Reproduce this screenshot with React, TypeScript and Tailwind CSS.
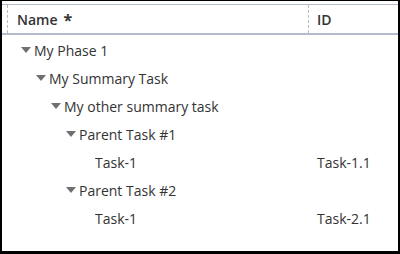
import React from "react";

type Row = { name: string; level: number; id?: string; parent?: boolean };

const rows: Row[] = [
  { name: "My Phase 1", level: 0, parent: true },
  { name: "My Summary Task", level: 1, parent: true },
  { name: "My other summary task", level: 2, parent: true },
  { name: "Parent Task #1", level: 3, parent: true },
  { name: "Task-1", level: 4, id: "Task-1.1" },
  { name: "Parent Task #2", level: 3, parent: true },
  { name: "Task-1", level: 4, id: "Task-2.1" },
];

const pads = ["pl-[19px]", "pl-[34px]", "pl-[49px]", "pl-[64px]", "pl-[93px]"];

export default function App() {
  return (
    <div
      className="w-[400px] h-[254px] bg-white border-black border-t border-l-2 border-r-2 border-b-[3px] overflow-hidden text-[#333]"
      style={{ fontFamily: '"Open Sans", sans-serif' }}
    >
      <div className="mt-[3px] h-[31px] flex border-t border-b-2 border-[#b4bccb] text-[14px]">
        <div className="ml-[5px] w-[302px] border-l border-r border-dashed border-[#b4bccb] flex items-center pl-[9px] pt-[1px] font-semibold">
          Name<span className="ml-[6px] text-[16px] font-bold">*</span>
        </div>
        <div className="flex-1 flex items-center pl-[8px] pt-[1px] font-semibold">ID</div>
      </div>
      <div className="text-[14px] pt-[1px]">
        {rows.map((r, i) => (
          <div key={i} className="h-[28px] flex items-center">
            <div className={`w-[310px] flex items-center ${pads[r.level]}`}>
              {r.parent && (
                <svg width="10" height="6" viewBox="0 0 10 6" className="mr-[3px]">
                  <polygon points="0,0 10,0 5,6" fill="#707070" />
                </svg>
              )}
              <span>{r.name}</span>
            </div>
            <div className="pl-[5px]">{r.id}</div>
          </div>
        ))}
      </div>
    </div>
  );
}
